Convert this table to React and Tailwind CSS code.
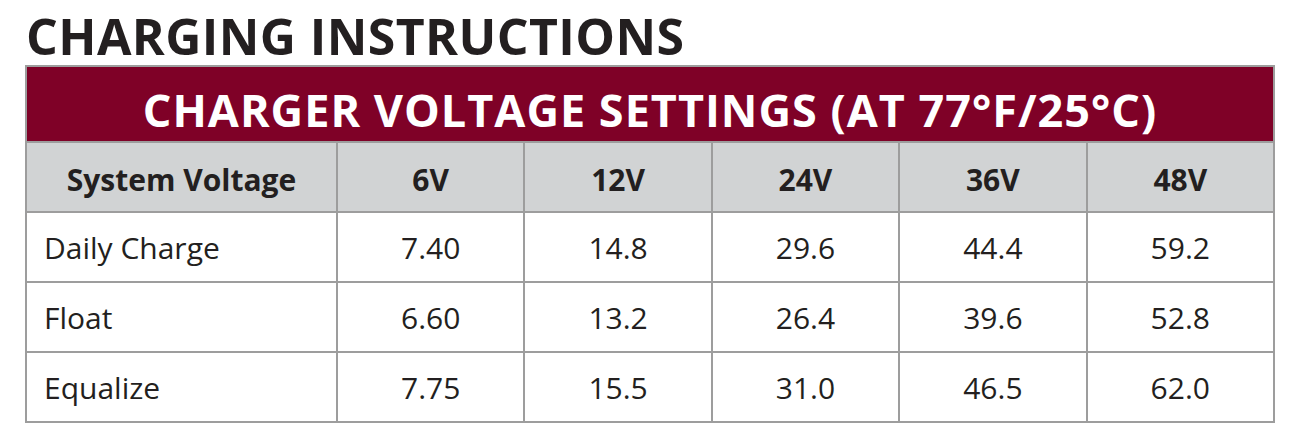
import React from 'react';

const columns = ['6V', '12V', '24V', '36V', '48V'];

const rows = [
    { label: 'Daily Charge', values: ['7.40', '14.8', '29.6', '44.4', '59.2'] },
    { label: 'Float', values: ['6.60', '13.2', '26.4', '39.6', '52.8'] },
    { label: 'Equalize', values: ['7.75', '15.5', '31.0', '46.5', '62.0'] },
];

const App = () => {
    return (
        <div className="w-[1302px] h-[433px] bg-white text-[#231f20] font-['Open_Sans',sans-serif] overflow-hidden">
            <h1 className="pl-[26px] pt-[11px] text-[50px] leading-[50px] font-bold tracking-[0.4px]">
                CHARGING INSTRUCTIONS
            </h1>

            <table className="ml-[25px] mt-[4px] w-[1250px] table-fixed border-collapse">
                <colgroup>
                    <col className="w-[311px]" />
                    {columns.map((c) => (
                        <col key={c} />
                    ))}
                </colgroup>
                <thead>
                    <tr>
                        <th
                            colSpan={6}
                            className="h-[76px] border-2 border-[#9d9d9d] bg-[#7f0127] pt-[11px] text-center text-[45px] font-bold leading-[45px] tracking-[1px] text-white"
                        >
                            CHARGER VOLTAGE SETTINGS (AT 77°F/25°C)
                        </th>
                    </tr>
                    <tr className="bg-[#d1d3d4]">
                        <th className="h-[70px] border-2 border-[#9d9d9d] pt-[4px] text-center text-[30px] font-bold">
                            System Voltage
                        </th>
                        {columns.map((c) => (
                            <th
                                key={c}
                                className="h-[70px] border-2 border-[#9d9d9d] pt-[4px] text-center text-[30px] font-bold"
                            >
                                {c}
                            </th>
                        ))}
                    </tr>
                </thead>
                <tbody>
                    {rows.map((row) => (
                        <tr key={row.label}>
                            <td className="h-[70px] border-2 border-[#9d9d9d] pl-[17px] text-left text-[30px]">
                                {row.label}
                            </td>
                            {row.values.map((v, i) => (
                                <td key={i} className="h-[70px] border-2 border-[#9d9d9d] text-center text-[30px]">
                                    {v}
                                </td>
                            ))}
                        </tr>
                    ))}
                </tbody>
            </table>
        </div>
    );
};

export default App;
